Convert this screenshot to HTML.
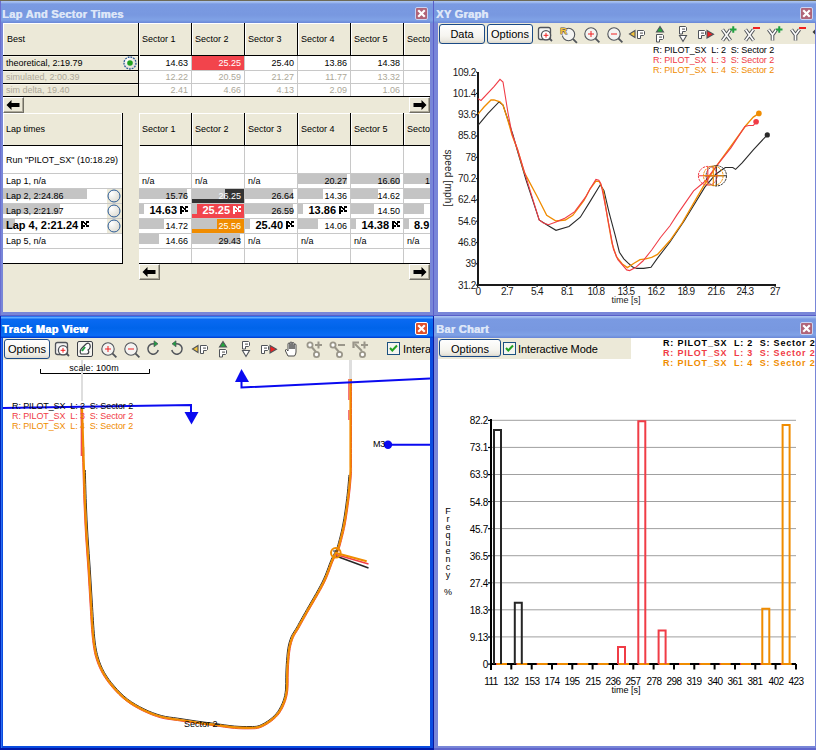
<!DOCTYPE html><html><head><meta charset="utf-8"><style>
html,body{margin:0;padding:0;}
body{width:816px;height:750px;position:relative;overflow:hidden;background:#fff;font-family:"Liberation Sans",sans-serif;}
body div{position:absolute;box-sizing:border-box;}
.t{white-space:nowrap;}
svg{position:absolute;}
</style></head><body>
<div style="left:0px;top:0px;width:816px;height:1px;background:#6e6a56;"></div>
<div style="left:0px;top:1px;width:434px;height:315px;background:#7886d8;"></div>
<div style="left:0px;top:1px;width:434px;height:22px;background:linear-gradient(#a6c0f0 0px,#a6c0f0 1px,#7a9ae2 3px,#7898e0 14px,#80a2e6 19px,#7090dc 21px,#6a86d6 22px);"></div>
<div class="t" style="left:2px;top:9px;font-size:11px;line-height:11px;color:#dde6f8;font-weight:bold;letter-spacing:0.3px;text-shadow:0.6px 0 0 #dde6f8;">Lap And Sector Times</div>
<div style="left:415px;top:7px;width:13px;height:13px;border:1px solid #c8d4f4;border-radius:2px;background:#b06478;"></div>
<svg style="left:415px;top:7px" width="13" height="13"><path d="M4 4 L9 9 M9 4 L4 9" stroke="#fff" stroke-width="2.2" stroke-linecap="square"/></svg>
<div style="left:434px;top:1px;width:385px;height:315px;background:#7886d8;"></div>
<div style="left:434px;top:1px;width:385px;height:22px;background:linear-gradient(#a6c0f0 0px,#a6c0f0 1px,#7a9ae2 3px,#7898e0 14px,#80a2e6 19px,#7090dc 21px,#6a86d6 22px);"></div>
<div class="t" style="left:436px;top:9px;font-size:11px;line-height:11px;color:#dde6f8;font-weight:bold;letter-spacing:0.3px;text-shadow:0.6px 0 0 #dde6f8;">XY Graph</div>
<div style="left:800px;top:7px;width:13px;height:13px;border:1px solid #c8d4f4;border-radius:2px;background:#b06478;"></div>
<svg style="left:800px;top:7px" width="13" height="13"><path d="M4 4 L9 9 M9 4 L4 9" stroke="#fff" stroke-width="2.2" stroke-linecap="square"/></svg>
<div style="left:0px;top:316px;width:434px;height:434px;background:#0a4ce0;"></div>
<div style="left:0px;top:316px;width:434px;height:22px;background:linear-gradient(#2a74f0 0px,#2a74f0 1px,#5eaaff 1px,#5eaaff 2px,#0a6af2 3px,#0064ea 12px,#0a6cf4 19px,#0a6af4 20px,#0048dc 21px,#0040d0 22px);"></div>
<div class="t" style="left:2px;top:324px;font-size:11px;line-height:11px;color:#fff;font-weight:bold;letter-spacing:0.3px;text-shadow:0.6px 0 0 #fff;">Track Map View</div>
<div style="left:415px;top:322px;width:13px;height:13px;border:1px solid #fff;border-radius:2px;background:#e0502a;"></div>
<svg style="left:415px;top:322px" width="13" height="13"><path d="M4 4 L9 9 M9 4 L4 9" stroke="#fff" stroke-width="2.2" stroke-linecap="square"/></svg>
<div style="left:434px;top:316px;width:385px;height:434px;background:#7886d8;"></div>
<div style="left:434px;top:316px;width:385px;height:22px;background:linear-gradient(#a6c0f0 0px,#a6c0f0 1px,#7a9ae2 3px,#7898e0 14px,#80a2e6 19px,#7090dc 21px,#6a86d6 22px);"></div>
<div class="t" style="left:436px;top:324px;font-size:11px;line-height:11px;color:#dde6f8;font-weight:bold;letter-spacing:0.3px;text-shadow:0.6px 0 0 #dde6f8;">Bar Chart</div>
<div style="left:800px;top:322px;width:13px;height:13px;border:1px solid #c8d4f4;border-radius:2px;background:#b06478;"></div>
<svg style="left:800px;top:322px" width="13" height="13"><path d="M4 4 L9 9 M9 4 L4 9" stroke="#fff" stroke-width="2.2" stroke-linecap="square"/></svg>
<div style="left:0px;top:1px;width:1px;height:315px;background:#6a6ed0;"></div>
<div style="left:433px;top:1px;width:1px;height:315px;background:#5a5fc8;"></div>
<div style="left:0px;top:315px;width:816px;height:1px;background:#5a5fc8;"></div>
<div style="left:0px;top:316px;width:1px;height:434px;background:#0024b8;"></div>
<div style="left:1px;top:338px;width:1px;height:412px;background:#2a6ef2;"></div>
<div style="left:433px;top:316px;width:1px;height:434px;background:#0a18a0;"></div>
<div style="left:0px;top:748px;width:434px;height:2px;background:#0018a8;"></div>
<div style="left:434px;top:748px;width:382px;height:2px;background:#6066cc;"></div>
<div style="left:3px;top:23px;width:427px;height:289px;background:#ece9d8;"></div>
<div style="left:438px;top:23px;width:377px;height:289px;background:#fff;"></div>
<div style="left:3px;top:338px;width:427px;height:408px;background:#fff;"></div>
<div style="left:438px;top:338px;width:377px;height:408px;background:#fff;"></div>
<div style="left:0;top:0;width:430px;height:316px;overflow:hidden;"><div style="left:3px;top:23px;width:135px;height:32px;background:#ece9d8;border-top:1px solid #fff;border-left:1px solid #fff;"></div>
<div style="left:3px;top:55px;width:136px;height:1px;background:#000;"></div>
<div style="left:138px;top:23px;width:1px;height:74px;background:#000;"></div>
<div class="t" style="left:7px;top:35px;font-size:9px;line-height:9px;color:#000;font-weight:normal;">Best</div>
<div style="left:3px;top:56px;width:135px;height:14px;background:#ece9d8;border-top:1px solid #f6f4ea;"></div>
<div style="left:3px;top:70px;width:135px;height:1px;background:#000;"></div>
<div class="t" style="left:6px;top:59px;font-size:9px;line-height:9px;color:#000;font-weight:normal;">theoretical, 2:19.79</div>
<div style="left:3px;top:71px;width:135px;height:12px;background:#ece9d8;border-top:1px solid #f6f4ea;"></div>
<div style="left:3px;top:83px;width:135px;height:1px;background:#000;"></div>
<div class="t" style="left:6px;top:73px;font-size:9px;line-height:9px;color:#aca899;font-weight:normal;">simulated, 2:00.39</div>
<div style="left:3px;top:84px;width:135px;height:12px;background:#ece9d8;border-top:1px solid #f6f4ea;"></div>
<div style="left:3px;top:96px;width:135px;height:1px;background:#000;"></div>
<div class="t" style="left:6px;top:86px;font-size:9px;line-height:9px;color:#aca899;font-weight:normal;">sim delta, 19.40</div>
<svg style="left:121.5px;top:54.5px" width="16" height="16"><defs><radialGradient id="rg" cx="0.3" cy="0.3" r="0.8"><stop offset="0" stop-color="#fff"/><stop offset="1" stop-color="#dcdad0"/></radialGradient></defs><circle cx="8" cy="8" r="6" fill="url(#rg)" stroke="#2a5a96" stroke-width="1.3" stroke-dasharray="1.8 1"/><circle cx="8" cy="8" r="2.8" fill="#21a121"/></svg>
<div style="left:139px;top:23px;width:291px;height:32px;background:#ece9d8;"></div>
<div style="left:139px;top:23px;width:52px;height:32px;background:#ece9d8;border-top:1px solid #fff;border-left:1px solid #fff;"></div>
<div style="left:191px;top:23px;width:1px;height:33px;background:#000;"></div>
<div class="t" style="left:142px;top:35px;font-size:9px;line-height:9px;color:#000;font-weight:normal;">Sector 1</div>
<div style="left:192px;top:23px;width:52px;height:32px;background:#ece9d8;border-top:1px solid #fff;border-left:1px solid #fff;"></div>
<div style="left:244px;top:23px;width:1px;height:33px;background:#000;"></div>
<div class="t" style="left:195px;top:35px;font-size:9px;line-height:9px;color:#000;font-weight:normal;">Sector 2</div>
<div style="left:245px;top:23px;width:52px;height:32px;background:#ece9d8;border-top:1px solid #fff;border-left:1px solid #fff;"></div>
<div style="left:297px;top:23px;width:1px;height:33px;background:#000;"></div>
<div class="t" style="left:248px;top:35px;font-size:9px;line-height:9px;color:#000;font-weight:normal;">Sector 3</div>
<div style="left:298px;top:23px;width:52px;height:32px;background:#ece9d8;border-top:1px solid #fff;border-left:1px solid #fff;"></div>
<div style="left:350px;top:23px;width:1px;height:33px;background:#000;"></div>
<div class="t" style="left:301px;top:35px;font-size:9px;line-height:9px;color:#000;font-weight:normal;">Sector 4</div>
<div style="left:351px;top:23px;width:52px;height:32px;background:#ece9d8;border-top:1px solid #fff;border-left:1px solid #fff;"></div>
<div style="left:403px;top:23px;width:1px;height:33px;background:#000;"></div>
<div class="t" style="left:354px;top:35px;font-size:9px;line-height:9px;color:#000;font-weight:normal;">Sector 5</div>
<div style="left:404px;top:23px;width:26px;height:32px;background:#ece9d8;border-top:1px solid #fff;border-left:1px solid #fff;"></div>
<div class="t" style="left:407px;top:35px;font-size:9px;line-height:9px;color:#000;font-weight:normal;">Sector 6</div>
<div style="left:140px;top:55px;width:290px;height:1px;background:#000;"></div>
<div style="left:139px;top:56px;width:291px;height:14px;background:#fff;"></div>
<div style="left:139px;top:70px;width:291px;height:1px;background:#c8c8c8;"></div>
<div style="left:191px;top:56px;width:1px;height:15px;background:#c8c8c8;"></div>
<div class="t" style="left:-112px;width:300px;text-align:right;top:59px;font-size:9px;line-height:9px;color:#000;font-weight:normal;">14.63</div>
<div style="left:244px;top:56px;width:1px;height:15px;background:#c8c8c8;"></div>
<div style="left:192px;top:56px;width:52px;height:14px;background:#f2444c;"></div>
<div class="t" style="left:-59px;width:300px;text-align:right;top:59px;font-size:9px;line-height:9px;color:#fff;font-weight:normal;">25.25</div>
<div style="left:297px;top:56px;width:1px;height:15px;background:#c8c8c8;"></div>
<div class="t" style="left:-6px;width:300px;text-align:right;top:59px;font-size:9px;line-height:9px;color:#000;font-weight:normal;">25.40</div>
<div style="left:350px;top:56px;width:1px;height:15px;background:#c8c8c8;"></div>
<div class="t" style="left:47px;width:300px;text-align:right;top:59px;font-size:9px;line-height:9px;color:#000;font-weight:normal;">13.86</div>
<div style="left:403px;top:56px;width:1px;height:15px;background:#c8c8c8;"></div>
<div class="t" style="left:100px;width:300px;text-align:right;top:59px;font-size:9px;line-height:9px;color:#000;font-weight:normal;">14.38</div>
<div style="left:139px;top:71px;width:291px;height:12px;background:#fff;"></div>
<div style="left:139px;top:83px;width:291px;height:1px;background:#c8c8c8;"></div>
<div style="left:191px;top:71px;width:1px;height:13px;background:#c8c8c8;"></div>
<div class="t" style="left:-112px;width:300px;text-align:right;top:73px;font-size:9px;line-height:9px;color:#aca899;font-weight:normal;">12.22</div>
<div style="left:244px;top:71px;width:1px;height:13px;background:#c8c8c8;"></div>
<div class="t" style="left:-59px;width:300px;text-align:right;top:73px;font-size:9px;line-height:9px;color:#aca899;font-weight:normal;">20.59</div>
<div style="left:297px;top:71px;width:1px;height:13px;background:#c8c8c8;"></div>
<div class="t" style="left:-6px;width:300px;text-align:right;top:73px;font-size:9px;line-height:9px;color:#aca899;font-weight:normal;">21.27</div>
<div style="left:350px;top:71px;width:1px;height:13px;background:#c8c8c8;"></div>
<div class="t" style="left:47px;width:300px;text-align:right;top:73px;font-size:9px;line-height:9px;color:#aca899;font-weight:normal;">11.77</div>
<div style="left:403px;top:71px;width:1px;height:13px;background:#c8c8c8;"></div>
<div class="t" style="left:100px;width:300px;text-align:right;top:73px;font-size:9px;line-height:9px;color:#aca899;font-weight:normal;">13.32</div>
<div style="left:139px;top:84px;width:291px;height:12px;background:#fff;"></div>
<div style="left:191px;top:84px;width:1px;height:13px;background:#c8c8c8;"></div>
<div class="t" style="left:-112px;width:300px;text-align:right;top:86px;font-size:9px;line-height:9px;color:#aca899;font-weight:normal;">2.41</div>
<div style="left:244px;top:84px;width:1px;height:13px;background:#c8c8c8;"></div>
<div class="t" style="left:-59px;width:300px;text-align:right;top:86px;font-size:9px;line-height:9px;color:#aca899;font-weight:normal;">4.66</div>
<div style="left:297px;top:84px;width:1px;height:13px;background:#c8c8c8;"></div>
<div class="t" style="left:-6px;width:300px;text-align:right;top:86px;font-size:9px;line-height:9px;color:#aca899;font-weight:normal;">4.13</div>
<div style="left:350px;top:84px;width:1px;height:13px;background:#c8c8c8;"></div>
<div class="t" style="left:47px;width:300px;text-align:right;top:86px;font-size:9px;line-height:9px;color:#aca899;font-weight:normal;">2.09</div>
<div style="left:403px;top:84px;width:1px;height:13px;background:#c8c8c8;"></div>
<div class="t" style="left:100px;width:300px;text-align:right;top:86px;font-size:9px;line-height:9px;color:#aca899;font-weight:normal;">1.06</div>
<div style="left:3px;top:96px;width:427px;height:1px;background:#000;"></div>
<div style="left:3px;top:97px;width:21px;height:16px;background:#ece9d8;border-top:1px solid #fff;border-left:1px solid #fff;border-right:1px solid #716f64;border-bottom:1px solid #716f64;box-shadow:inset -1px -1px 0 #aca899;"></div><svg style="left:0px;top:0px" width="816" height="750"><path d="M6.5 105.0 L11.5 100.0 L11.5 103.0 L19.5 103.0 L19.5 107.0 L11.5 107.0 L11.5 110.0 Z" fill="#000"/></svg>
<div style="left:409px;top:97px;width:21px;height:16px;background:#ece9d8;border-top:1px solid #fff;border-left:1px solid #fff;border-right:1px solid #716f64;border-bottom:1px solid #716f64;box-shadow:inset -1px -1px 0 #aca899;"></div><svg style="left:0px;top:0px" width="816" height="750"><path d="M426.5 105.0 L421.5 100.0 L421.5 103.0 L413.5 103.0 L413.5 107.0 L421.5 107.0 L421.5 110.0 Z" fill="#000"/></svg>
<div style="left:3px;top:113px;width:119px;height:32px;background:#ece9d8;border-top:1px solid #fff;border-left:1px solid #fff;border-right:1px solid #fff;"></div>
<div style="left:122px;top:113px;width:1px;height:151px;background:#000;"></div>
<div style="left:3px;top:145px;width:119px;height:1px;background:#000;"></div>
<div class="t" style="left:6px;top:125px;font-size:9px;line-height:9px;color:#000;font-weight:normal;">Lap times</div>
<div style="left:139px;top:113px;width:291px;height:32px;background:#ece9d8;"></div>
<div style="left:139px;top:113px;width:52px;height:32px;background:#ece9d8;border-top:1px solid #fff;border-left:1px solid #fff;"></div>
<div style="left:191px;top:113px;width:1px;height:33px;background:#000;"></div>
<div class="t" style="left:142px;top:125px;font-size:9px;line-height:9px;color:#000;font-weight:normal;">Sector 1</div>
<div style="left:192px;top:113px;width:52px;height:32px;background:#ece9d8;border-top:1px solid #fff;border-left:1px solid #fff;"></div>
<div style="left:244px;top:113px;width:1px;height:33px;background:#000;"></div>
<div class="t" style="left:195px;top:125px;font-size:9px;line-height:9px;color:#000;font-weight:normal;">Sector 2</div>
<div style="left:245px;top:113px;width:52px;height:32px;background:#ece9d8;border-top:1px solid #fff;border-left:1px solid #fff;"></div>
<div style="left:297px;top:113px;width:1px;height:33px;background:#000;"></div>
<div class="t" style="left:248px;top:125px;font-size:9px;line-height:9px;color:#000;font-weight:normal;">Sector 3</div>
<div style="left:298px;top:113px;width:52px;height:32px;background:#ece9d8;border-top:1px solid #fff;border-left:1px solid #fff;"></div>
<div style="left:350px;top:113px;width:1px;height:33px;background:#000;"></div>
<div class="t" style="left:301px;top:125px;font-size:9px;line-height:9px;color:#000;font-weight:normal;">Sector 4</div>
<div style="left:351px;top:113px;width:52px;height:32px;background:#ece9d8;border-top:1px solid #fff;border-left:1px solid #fff;"></div>
<div style="left:403px;top:113px;width:1px;height:33px;background:#000;"></div>
<div class="t" style="left:354px;top:125px;font-size:9px;line-height:9px;color:#000;font-weight:normal;">Sector 5</div>
<div style="left:404px;top:113px;width:26px;height:32px;background:#ece9d8;border-top:1px solid #fff;border-left:1px solid #fff;"></div>
<div class="t" style="left:407px;top:125px;font-size:9px;line-height:9px;color:#000;font-weight:normal;">Sector 6</div>
<div style="left:140px;top:145px;width:290px;height:1px;background:#000;"></div>
<div style="left:3px;top:146px;width:119px;height:117px;background:#fff;"></div>
<div style="left:139px;top:146px;width:291px;height:117px;background:#fff;"></div>
<div style="left:3px;top:189px;width:84px;height:10px;background:#c4c4c4;"></div>
<div style="left:3px;top:204px;width:57px;height:10px;background:#c4c4c4;"></div>
<div style="left:3px;top:219px;width:12px;height:10px;background:#c4c4c4;"></div>
<div style="left:107px;top:189px;width:15px;height:14px;background:#ece9d8;"></div>
<svg style="left:105.5px;top:187.5px" width="16" height="16"><defs><radialGradient id="rg" cx="0.3" cy="0.3" r="0.8"><stop offset="0" stop-color="#fff"/><stop offset="1" stop-color="#dcdad0"/></radialGradient></defs><circle cx="8" cy="8" r="6" fill="url(#rg)" stroke="#2a5a96" stroke-width="1" /></svg>
<div style="left:107px;top:204px;width:15px;height:14px;background:#ece9d8;"></div>
<svg style="left:105.5px;top:202.5px" width="16" height="16"><defs><radialGradient id="rg" cx="0.3" cy="0.3" r="0.8"><stop offset="0" stop-color="#fff"/><stop offset="1" stop-color="#dcdad0"/></radialGradient></defs><circle cx="8" cy="8" r="6" fill="url(#rg)" stroke="#2a5a96" stroke-width="1" /></svg>
<div style="left:107px;top:219px;width:15px;height:14px;background:#ece9d8;"></div>
<svg style="left:105.5px;top:217.5px" width="16" height="16"><defs><radialGradient id="rg" cx="0.3" cy="0.3" r="0.8"><stop offset="0" stop-color="#fff"/><stop offset="1" stop-color="#dcdad0"/></radialGradient></defs><circle cx="8" cy="8" r="6" fill="url(#rg)" stroke="#2a5a96" stroke-width="1" /></svg>
<div style="left:3px;top:173px;width:119px;height:1px;background:#c8c8c8;"></div>
<div style="left:139px;top:173px;width:291px;height:1px;background:#c8c8c8;"></div>
<div style="left:3px;top:188px;width:119px;height:1px;background:#c8c8c8;"></div>
<div style="left:139px;top:188px;width:291px;height:1px;background:#c8c8c8;"></div>
<div style="left:3px;top:203px;width:119px;height:1px;background:#c8c8c8;"></div>
<div style="left:139px;top:203px;width:291px;height:1px;background:#c8c8c8;"></div>
<div style="left:3px;top:218px;width:119px;height:1px;background:#c8c8c8;"></div>
<div style="left:139px;top:218px;width:291px;height:1px;background:#c8c8c8;"></div>
<div style="left:3px;top:233px;width:119px;height:1px;background:#c8c8c8;"></div>
<div style="left:139px;top:233px;width:291px;height:1px;background:#c8c8c8;"></div>
<div style="left:3px;top:248px;width:119px;height:1px;background:#c8c8c8;"></div>
<div style="left:139px;top:248px;width:291px;height:1px;background:#c8c8c8;"></div>
<div style="left:3px;top:263px;width:120px;height:1px;background:#000;"></div>
<div style="left:139px;top:263px;width:291px;height:1px;background:#000;"></div>
<div style="left:191px;top:146px;width:1px;height:117px;background:#c8c8c8;"></div>
<div style="left:244px;top:146px;width:1px;height:117px;background:#c8c8c8;"></div>
<div style="left:297px;top:146px;width:1px;height:117px;background:#c8c8c8;"></div>
<div style="left:350px;top:146px;width:1px;height:117px;background:#c8c8c8;"></div>
<div style="left:403px;top:146px;width:1px;height:117px;background:#c8c8c8;"></div>
<div class="t" style="left:6px;top:156px;font-size:9px;line-height:9px;color:#000;font-weight:normal;">Run &quot;PILOT_SX&quot; (10:18.29)</div>
<div class="t" style="left:6px;top:177px;font-size:9px;line-height:9px;color:#000;font-weight:normal;">Lap 1, n/a</div>
<div class="t" style="left:6px;top:192px;font-size:9px;line-height:9px;color:#000;font-weight:normal;">Lap 2, 2:24.86</div>
<div class="t" style="left:6px;top:207px;font-size:9px;line-height:9px;color:#000;font-weight:normal;">Lap 3, 2:21.97</div>
<div class="t" style="left:6px;top:220px;font-size:11px;line-height:11px;color:#000;font-weight:bold;">Lap 4, 2:21.24</div>
<svg style="left:81px;top:221px" width="8" height="8" shape-rendering="crispEdges"><rect x="0" y="0" width="1" height="1" fill="#000"/><rect x="1" y="0" width="1" height="1" fill="#000"/><rect x="2" y="0" width="1" height="1" fill="#000"/><rect x="5" y="0" width="1" height="1" fill="#000"/><rect x="6" y="0" width="1" height="1" fill="#000"/><rect x="7" y="0" width="1" height="1" fill="#000"/><rect x="0" y="1" width="1" height="1" fill="#000"/><rect x="1" y="1" width="1" height="1" fill="#000"/><rect x="2" y="1" width="1" height="1" fill="#000"/><rect x="3" y="1" width="1" height="1" fill="#000"/><rect x="5" y="1" width="1" height="1" fill="#000"/><rect x="6" y="1" width="1" height="1" fill="#000"/><rect x="7" y="1" width="1" height="1" fill="#000"/><rect x="0" y="2" width="1" height="1" fill="#000"/><rect x="1" y="2" width="1" height="1" fill="#000"/><rect x="3" y="2" width="1" height="1" fill="#000"/><rect x="4" y="2" width="1" height="1" fill="#000"/><rect x="5" y="2" width="1" height="1" fill="#000"/><rect x="0" y="3" width="1" height="1" fill="#000"/><rect x="1" y="3" width="1" height="1" fill="#000"/><rect x="4" y="3" width="1" height="1" fill="#000"/><rect x="5" y="3" width="1" height="1" fill="#000"/><rect x="0" y="4" width="1" height="1" fill="#000"/><rect x="1" y="4" width="1" height="1" fill="#000"/><rect x="2" y="4" width="1" height="1" fill="#000"/><rect x="3" y="4" width="1" height="1" fill="#000"/><rect x="5" y="4" width="1" height="1" fill="#000"/><rect x="6" y="4" width="1" height="1" fill="#000"/><rect x="7" y="4" width="1" height="1" fill="#000"/><rect x="0" y="5" width="1" height="1" fill="#000"/><rect x="1" y="5" width="1" height="1" fill="#000"/><rect x="2" y="5" width="1" height="1" fill="#000"/><rect x="3" y="5" width="1" height="1" fill="#000"/><rect x="5" y="5" width="1" height="1" fill="#000"/><rect x="6" y="5" width="1" height="1" fill="#000"/><rect x="7" y="5" width="1" height="1" fill="#000"/><rect x="0" y="6" width="1" height="1" fill="#000"/><rect x="1" y="6" width="1" height="1" fill="#000"/><rect x="0" y="7" width="1" height="1" fill="#000"/><rect x="1" y="7" width="1" height="1" fill="#000"/></svg>
<div class="t" style="left:6px;top:237px;font-size:9px;line-height:9px;color:#000;font-weight:normal;">Lap 5, n/a</div>
<div style="left:139px;top:146px;width:291px;height:117px;overflow:hidden;">
<div class="t" style="left:3px;top:31px;font-size:9px;line-height:9px;color:#000;font-weight:normal;">n/a</div>
<div class="t" style="left:56px;top:31px;font-size:9px;line-height:9px;color:#000;font-weight:normal;">n/a</div>
<div class="t" style="left:109px;top:31px;font-size:9px;line-height:9px;color:#000;font-weight:normal;">n/a</div>
<div style="left:159px;top:28px;width:49px;height:10px;background:#c4c4c4;"></div>
<div class="t" style="left:-92px;width:300px;text-align:right;top:31px;font-size:9px;line-height:9px;color:#000;font-weight:normal;">20.27</div>
<div style="left:212px;top:28px;width:49px;height:10px;background:#c4c4c4;"></div>
<div class="t" style="left:-39px;width:300px;text-align:right;top:31px;font-size:9px;line-height:9px;color:#000;font-weight:normal;">16.60</div>
<div style="left:265px;top:28px;width:26px;height:10px;background:#c4c4c4;"></div>
<div class="t" style="left:286px;top:31px;font-size:9px;line-height:9px;color:#000;font-weight:normal;">1</div>
<div style="left:0px;top:43px;width:48px;height:10px;background:#c4c4c4;"></div>
<div class="t" style="left:-251px;width:300px;text-align:right;top:46px;font-size:9px;line-height:9px;color:#000;font-weight:normal;">15.76</div>
<div style="left:53px;top:43px;width:52px;height:10px;background:#333333;"></div>
<div style="left:53px;top:43px;width:33px;height:10px;background:#c4c4c4;"></div>
<div style="left:53px;top:53px;width:52px;height:4px;background:#333333;"></div>
<div class="t" style="left:-198px;width:300px;text-align:right;top:46px;font-size:9px;line-height:9px;color:#fff;font-weight:normal;">26.25</div>
<div style="left:106px;top:43px;width:48px;height:10px;background:#c4c4c4;"></div>
<div class="t" style="left:-145px;width:300px;text-align:right;top:46px;font-size:9px;line-height:9px;color:#000;font-weight:normal;">26.64</div>
<div style="left:159px;top:43px;width:25px;height:10px;background:#c4c4c4;"></div>
<div class="t" style="left:-92px;width:300px;text-align:right;top:46px;font-size:9px;line-height:9px;color:#000;font-weight:normal;">14.36</div>
<div style="left:212px;top:43px;width:27px;height:10px;background:#c4c4c4;"></div>
<div class="t" style="left:-39px;width:300px;text-align:right;top:46px;font-size:9px;line-height:9px;color:#000;font-weight:normal;">14.62</div>
<div style="left:265px;top:43px;width:26px;height:10px;background:#c4c4c4;"></div>
<div style="left:0px;top:58px;width:5px;height:10px;background:#c4c4c4;"></div>
<div class="t" style="left:-262px;width:300px;text-align:right;top:59px;font-size:11px;line-height:11px;color:#000;font-weight:bold;">14.63</div>
<svg style="left:41px;top:60px" width="8" height="8" shape-rendering="crispEdges"><rect x="0" y="0" width="1" height="1" fill="#000"/><rect x="1" y="0" width="1" height="1" fill="#000"/><rect x="2" y="0" width="1" height="1" fill="#000"/><rect x="5" y="0" width="1" height="1" fill="#000"/><rect x="6" y="0" width="1" height="1" fill="#000"/><rect x="7" y="0" width="1" height="1" fill="#000"/><rect x="0" y="1" width="1" height="1" fill="#000"/><rect x="1" y="1" width="1" height="1" fill="#000"/><rect x="2" y="1" width="1" height="1" fill="#000"/><rect x="3" y="1" width="1" height="1" fill="#000"/><rect x="5" y="1" width="1" height="1" fill="#000"/><rect x="6" y="1" width="1" height="1" fill="#000"/><rect x="7" y="1" width="1" height="1" fill="#000"/><rect x="0" y="2" width="1" height="1" fill="#000"/><rect x="1" y="2" width="1" height="1" fill="#000"/><rect x="3" y="2" width="1" height="1" fill="#000"/><rect x="4" y="2" width="1" height="1" fill="#000"/><rect x="5" y="2" width="1" height="1" fill="#000"/><rect x="0" y="3" width="1" height="1" fill="#000"/><rect x="1" y="3" width="1" height="1" fill="#000"/><rect x="4" y="3" width="1" height="1" fill="#000"/><rect x="5" y="3" width="1" height="1" fill="#000"/><rect x="0" y="4" width="1" height="1" fill="#000"/><rect x="1" y="4" width="1" height="1" fill="#000"/><rect x="2" y="4" width="1" height="1" fill="#000"/><rect x="3" y="4" width="1" height="1" fill="#000"/><rect x="5" y="4" width="1" height="1" fill="#000"/><rect x="6" y="4" width="1" height="1" fill="#000"/><rect x="7" y="4" width="1" height="1" fill="#000"/><rect x="0" y="5" width="1" height="1" fill="#000"/><rect x="1" y="5" width="1" height="1" fill="#000"/><rect x="2" y="5" width="1" height="1" fill="#000"/><rect x="3" y="5" width="1" height="1" fill="#000"/><rect x="5" y="5" width="1" height="1" fill="#000"/><rect x="6" y="5" width="1" height="1" fill="#000"/><rect x="7" y="5" width="1" height="1" fill="#000"/><rect x="0" y="6" width="1" height="1" fill="#000"/><rect x="1" y="6" width="1" height="1" fill="#000"/><rect x="0" y="7" width="1" height="1" fill="#000"/><rect x="1" y="7" width="1" height="1" fill="#000"/></svg>
<div style="left:53px;top:58px;width:52px;height:10px;background:#f2444c;"></div>
<div style="left:53px;top:58px;width:5px;height:10px;background:#c4c4c4;"></div>
<div style="left:53px;top:68px;width:52px;height:4px;background:#f2444c;"></div>
<div class="t" style="left:-209px;width:300px;text-align:right;top:59px;font-size:11px;line-height:11px;color:#fff;font-weight:bold;">25.25</div>
<svg style="left:94px;top:60px" width="8" height="8" shape-rendering="crispEdges"><rect x="0" y="0" width="1" height="1" fill="#fff"/><rect x="1" y="0" width="1" height="1" fill="#fff"/><rect x="2" y="0" width="1" height="1" fill="#fff"/><rect x="5" y="0" width="1" height="1" fill="#fff"/><rect x="6" y="0" width="1" height="1" fill="#fff"/><rect x="7" y="0" width="1" height="1" fill="#fff"/><rect x="0" y="1" width="1" height="1" fill="#fff"/><rect x="1" y="1" width="1" height="1" fill="#fff"/><rect x="2" y="1" width="1" height="1" fill="#fff"/><rect x="3" y="1" width="1" height="1" fill="#fff"/><rect x="5" y="1" width="1" height="1" fill="#fff"/><rect x="6" y="1" width="1" height="1" fill="#fff"/><rect x="7" y="1" width="1" height="1" fill="#fff"/><rect x="0" y="2" width="1" height="1" fill="#fff"/><rect x="1" y="2" width="1" height="1" fill="#fff"/><rect x="3" y="2" width="1" height="1" fill="#fff"/><rect x="4" y="2" width="1" height="1" fill="#fff"/><rect x="5" y="2" width="1" height="1" fill="#fff"/><rect x="0" y="3" width="1" height="1" fill="#fff"/><rect x="1" y="3" width="1" height="1" fill="#fff"/><rect x="4" y="3" width="1" height="1" fill="#fff"/><rect x="5" y="3" width="1" height="1" fill="#fff"/><rect x="0" y="4" width="1" height="1" fill="#fff"/><rect x="1" y="4" width="1" height="1" fill="#fff"/><rect x="2" y="4" width="1" height="1" fill="#fff"/><rect x="3" y="4" width="1" height="1" fill="#fff"/><rect x="5" y="4" width="1" height="1" fill="#fff"/><rect x="6" y="4" width="1" height="1" fill="#fff"/><rect x="7" y="4" width="1" height="1" fill="#fff"/><rect x="0" y="5" width="1" height="1" fill="#fff"/><rect x="1" y="5" width="1" height="1" fill="#fff"/><rect x="2" y="5" width="1" height="1" fill="#fff"/><rect x="3" y="5" width="1" height="1" fill="#fff"/><rect x="5" y="5" width="1" height="1" fill="#fff"/><rect x="6" y="5" width="1" height="1" fill="#fff"/><rect x="7" y="5" width="1" height="1" fill="#fff"/><rect x="0" y="6" width="1" height="1" fill="#fff"/><rect x="1" y="6" width="1" height="1" fill="#fff"/><rect x="0" y="7" width="1" height="1" fill="#fff"/><rect x="1" y="7" width="1" height="1" fill="#fff"/></svg>
<div style="left:106px;top:58px;width:48px;height:10px;background:#c4c4c4;"></div>
<div class="t" style="left:-145px;width:300px;text-align:right;top:61px;font-size:9px;line-height:9px;color:#000;font-weight:normal;">26.59</div>
<div style="left:159px;top:58px;width:5px;height:10px;background:#c4c4c4;"></div>
<div class="t" style="left:-103px;width:300px;text-align:right;top:59px;font-size:11px;line-height:11px;color:#000;font-weight:bold;">13.86</div>
<svg style="left:200px;top:60px" width="8" height="8" shape-rendering="crispEdges"><rect x="0" y="0" width="1" height="1" fill="#000"/><rect x="1" y="0" width="1" height="1" fill="#000"/><rect x="2" y="0" width="1" height="1" fill="#000"/><rect x="5" y="0" width="1" height="1" fill="#000"/><rect x="6" y="0" width="1" height="1" fill="#000"/><rect x="7" y="0" width="1" height="1" fill="#000"/><rect x="0" y="1" width="1" height="1" fill="#000"/><rect x="1" y="1" width="1" height="1" fill="#000"/><rect x="2" y="1" width="1" height="1" fill="#000"/><rect x="3" y="1" width="1" height="1" fill="#000"/><rect x="5" y="1" width="1" height="1" fill="#000"/><rect x="6" y="1" width="1" height="1" fill="#000"/><rect x="7" y="1" width="1" height="1" fill="#000"/><rect x="0" y="2" width="1" height="1" fill="#000"/><rect x="1" y="2" width="1" height="1" fill="#000"/><rect x="3" y="2" width="1" height="1" fill="#000"/><rect x="4" y="2" width="1" height="1" fill="#000"/><rect x="5" y="2" width="1" height="1" fill="#000"/><rect x="0" y="3" width="1" height="1" fill="#000"/><rect x="1" y="3" width="1" height="1" fill="#000"/><rect x="4" y="3" width="1" height="1" fill="#000"/><rect x="5" y="3" width="1" height="1" fill="#000"/><rect x="0" y="4" width="1" height="1" fill="#000"/><rect x="1" y="4" width="1" height="1" fill="#000"/><rect x="2" y="4" width="1" height="1" fill="#000"/><rect x="3" y="4" width="1" height="1" fill="#000"/><rect x="5" y="4" width="1" height="1" fill="#000"/><rect x="6" y="4" width="1" height="1" fill="#000"/><rect x="7" y="4" width="1" height="1" fill="#000"/><rect x="0" y="5" width="1" height="1" fill="#000"/><rect x="1" y="5" width="1" height="1" fill="#000"/><rect x="2" y="5" width="1" height="1" fill="#000"/><rect x="3" y="5" width="1" height="1" fill="#000"/><rect x="5" y="5" width="1" height="1" fill="#000"/><rect x="6" y="5" width="1" height="1" fill="#000"/><rect x="7" y="5" width="1" height="1" fill="#000"/><rect x="0" y="6" width="1" height="1" fill="#000"/><rect x="1" y="6" width="1" height="1" fill="#000"/><rect x="0" y="7" width="1" height="1" fill="#000"/><rect x="1" y="7" width="1" height="1" fill="#000"/></svg>
<div style="left:212px;top:58px;width:23px;height:10px;background:#c4c4c4;"></div>
<div class="t" style="left:-39px;width:300px;text-align:right;top:61px;font-size:9px;line-height:9px;color:#000;font-weight:normal;">14.50</div>
<div style="left:265px;top:58px;width:20px;height:10px;background:#c4c4c4;"></div>
<div style="left:0px;top:73px;width:25px;height:10px;background:#c4c4c4;"></div>
<div class="t" style="left:-251px;width:300px;text-align:right;top:76px;font-size:9px;line-height:9px;color:#000;font-weight:normal;">14.72</div>
<div style="left:53px;top:73px;width:52px;height:10px;background:#f08c00;"></div>
<div style="left:53px;top:73px;width:25px;height:10px;background:#c4c4c4;"></div>
<div style="left:53px;top:83px;width:52px;height:4px;background:#f08c00;"></div>
<div class="t" style="left:-198px;width:300px;text-align:right;top:76px;font-size:9px;line-height:9px;color:#fff;font-weight:normal;">25.56</div>
<div style="left:106px;top:73px;width:5px;height:10px;background:#c4c4c4;"></div>
<div class="t" style="left:-156px;width:300px;text-align:right;top:74px;font-size:11px;line-height:11px;color:#000;font-weight:bold;">25.40</div>
<svg style="left:147px;top:75px" width="8" height="8" shape-rendering="crispEdges"><rect x="0" y="0" width="1" height="1" fill="#000"/><rect x="1" y="0" width="1" height="1" fill="#000"/><rect x="2" y="0" width="1" height="1" fill="#000"/><rect x="5" y="0" width="1" height="1" fill="#000"/><rect x="6" y="0" width="1" height="1" fill="#000"/><rect x="7" y="0" width="1" height="1" fill="#000"/><rect x="0" y="1" width="1" height="1" fill="#000"/><rect x="1" y="1" width="1" height="1" fill="#000"/><rect x="2" y="1" width="1" height="1" fill="#000"/><rect x="3" y="1" width="1" height="1" fill="#000"/><rect x="5" y="1" width="1" height="1" fill="#000"/><rect x="6" y="1" width="1" height="1" fill="#000"/><rect x="7" y="1" width="1" height="1" fill="#000"/><rect x="0" y="2" width="1" height="1" fill="#000"/><rect x="1" y="2" width="1" height="1" fill="#000"/><rect x="3" y="2" width="1" height="1" fill="#000"/><rect x="4" y="2" width="1" height="1" fill="#000"/><rect x="5" y="2" width="1" height="1" fill="#000"/><rect x="0" y="3" width="1" height="1" fill="#000"/><rect x="1" y="3" width="1" height="1" fill="#000"/><rect x="4" y="3" width="1" height="1" fill="#000"/><rect x="5" y="3" width="1" height="1" fill="#000"/><rect x="0" y="4" width="1" height="1" fill="#000"/><rect x="1" y="4" width="1" height="1" fill="#000"/><rect x="2" y="4" width="1" height="1" fill="#000"/><rect x="3" y="4" width="1" height="1" fill="#000"/><rect x="5" y="4" width="1" height="1" fill="#000"/><rect x="6" y="4" width="1" height="1" fill="#000"/><rect x="7" y="4" width="1" height="1" fill="#000"/><rect x="0" y="5" width="1" height="1" fill="#000"/><rect x="1" y="5" width="1" height="1" fill="#000"/><rect x="2" y="5" width="1" height="1" fill="#000"/><rect x="3" y="5" width="1" height="1" fill="#000"/><rect x="5" y="5" width="1" height="1" fill="#000"/><rect x="6" y="5" width="1" height="1" fill="#000"/><rect x="7" y="5" width="1" height="1" fill="#000"/><rect x="0" y="6" width="1" height="1" fill="#000"/><rect x="1" y="6" width="1" height="1" fill="#000"/><rect x="0" y="7" width="1" height="1" fill="#000"/><rect x="1" y="7" width="1" height="1" fill="#000"/></svg>
<div style="left:159px;top:73px;width:20px;height:10px;background:#c4c4c4;"></div>
<div class="t" style="left:-92px;width:300px;text-align:right;top:76px;font-size:9px;line-height:9px;color:#000;font-weight:normal;">14.06</div>
<div style="left:212px;top:73px;width:5px;height:10px;background:#c4c4c4;"></div>
<div class="t" style="left:-50px;width:300px;text-align:right;top:74px;font-size:11px;line-height:11px;color:#000;font-weight:bold;">14.38</div>
<svg style="left:253px;top:75px" width="8" height="8" shape-rendering="crispEdges"><rect x="0" y="0" width="1" height="1" fill="#000"/><rect x="1" y="0" width="1" height="1" fill="#000"/><rect x="2" y="0" width="1" height="1" fill="#000"/><rect x="5" y="0" width="1" height="1" fill="#000"/><rect x="6" y="0" width="1" height="1" fill="#000"/><rect x="7" y="0" width="1" height="1" fill="#000"/><rect x="0" y="1" width="1" height="1" fill="#000"/><rect x="1" y="1" width="1" height="1" fill="#000"/><rect x="2" y="1" width="1" height="1" fill="#000"/><rect x="3" y="1" width="1" height="1" fill="#000"/><rect x="5" y="1" width="1" height="1" fill="#000"/><rect x="6" y="1" width="1" height="1" fill="#000"/><rect x="7" y="1" width="1" height="1" fill="#000"/><rect x="0" y="2" width="1" height="1" fill="#000"/><rect x="1" y="2" width="1" height="1" fill="#000"/><rect x="3" y="2" width="1" height="1" fill="#000"/><rect x="4" y="2" width="1" height="1" fill="#000"/><rect x="5" y="2" width="1" height="1" fill="#000"/><rect x="0" y="3" width="1" height="1" fill="#000"/><rect x="1" y="3" width="1" height="1" fill="#000"/><rect x="4" y="3" width="1" height="1" fill="#000"/><rect x="5" y="3" width="1" height="1" fill="#000"/><rect x="0" y="4" width="1" height="1" fill="#000"/><rect x="1" y="4" width="1" height="1" fill="#000"/><rect x="2" y="4" width="1" height="1" fill="#000"/><rect x="3" y="4" width="1" height="1" fill="#000"/><rect x="5" y="4" width="1" height="1" fill="#000"/><rect x="6" y="4" width="1" height="1" fill="#000"/><rect x="7" y="4" width="1" height="1" fill="#000"/><rect x="0" y="5" width="1" height="1" fill="#000"/><rect x="1" y="5" width="1" height="1" fill="#000"/><rect x="2" y="5" width="1" height="1" fill="#000"/><rect x="3" y="5" width="1" height="1" fill="#000"/><rect x="5" y="5" width="1" height="1" fill="#000"/><rect x="6" y="5" width="1" height="1" fill="#000"/><rect x="7" y="5" width="1" height="1" fill="#000"/><rect x="0" y="6" width="1" height="1" fill="#000"/><rect x="1" y="6" width="1" height="1" fill="#000"/><rect x="0" y="7" width="1" height="1" fill="#000"/><rect x="1" y="7" width="1" height="1" fill="#000"/></svg>
<div style="left:265px;top:73px;width:5px;height:10px;background:#c4c4c4;"></div>
<div class="t" style="left:275px;top:74px;font-size:11px;line-height:11px;color:#000;font-weight:bold;">8.9</div>
<div style="left:0px;top:88px;width:20px;height:10px;background:#c4c4c4;"></div>
<div class="t" style="left:-251px;width:300px;text-align:right;top:91px;font-size:9px;line-height:9px;color:#000;font-weight:normal;">14.66</div>
<div style="left:53px;top:88px;width:48px;height:10px;background:#c4c4c4;"></div>
<div class="t" style="left:-198px;width:300px;text-align:right;top:91px;font-size:9px;line-height:9px;color:#000;font-weight:normal;">29.43</div>
<div class="t" style="left:109px;top:91px;font-size:9px;line-height:9px;color:#000;font-weight:normal;">n/a</div>
<div class="t" style="left:162px;top:91px;font-size:9px;line-height:9px;color:#000;font-weight:normal;">n/a</div>
<div class="t" style="left:215px;top:91px;font-size:9px;line-height:9px;color:#000;font-weight:normal;">n/a</div>
<div class="t" style="left:268px;top:91px;font-size:9px;line-height:9px;color:#000;font-weight:normal;">n/a</div>
</div>
<div style="left:139px;top:264px;width:21px;height:16px;background:#ece9d8;border-top:1px solid #fff;border-left:1px solid #fff;border-right:1px solid #716f64;border-bottom:1px solid #716f64;box-shadow:inset -1px -1px 0 #aca899;"></div><svg style="left:0px;top:0px" width="816" height="750"><path d="M142.5 272.0 L147.5 267.0 L147.5 270.0 L155.5 270.0 L155.5 274.0 L147.5 274.0 L147.5 277.0 Z" fill="#000"/></svg>
<div style="left:409px;top:264px;width:21px;height:16px;background:#ece9d8;border-top:1px solid #fff;border-left:1px solid #fff;border-right:1px solid #716f64;border-bottom:1px solid #716f64;box-shadow:inset -1px -1px 0 #aca899;"></div><svg style="left:0px;top:0px" width="816" height="750"><path d="M426.5 272.0 L421.5 267.0 L421.5 270.0 L413.5 270.0 L413.5 274.0 L421.5 274.0 L421.5 277.0 Z" fill="#000"/></svg></div>
<div style="left:438px;top:23px;width:377px;height:21px;background:#ece9d8;"></div>
<div style="left:439px;top:24px;width:46px;height:20px;border:1px solid #1b4a86;border-radius:3px;background:linear-gradient(#fefefe,#f6f5f0 60%,#ebe9e1 85%,#dcd8cc);"></div>
<div class="t" style="left:262px;width:400px;text-align:center;top:29px;font-size:11px;line-height:11px;color:#000;font-weight:normal;">Data</div>
<div style="left:487px;top:24px;width:46px;height:20px;border:1px solid #1b4a86;border-radius:3px;background:linear-gradient(#fefefe,#f6f5f0 60%,#ebe9e1 85%,#dcd8cc);"></div>
<div class="t" style="left:310px;width:400px;text-align:center;top:29px;font-size:11px;line-height:11px;color:#000;font-weight:normal;">Options</div>
<svg style="left:537px;top:26px" width="18" height="18" viewBox="537 26 18 18"><rect x="538.5" y="27.5" width="12" height="12" rx="2" fill="#f4f4f2" stroke="#50545a" stroke-width="1.3"/><line x1="549" y1="38" x2="552" y2="41" stroke="#50545a" stroke-width="1.8"/><circle cx="546" cy="35.3" r="4.6" fill="#fff" stroke="#50545a" stroke-width="1.3"/><path d="M543.6 35.3 H548.4 M546 32.9 V37.7" stroke="#f02020" stroke-width="1.0"/></svg>
<svg style="left:559px;top:24px" width="20" height="20" viewBox="559 24 20 20"><line x1="572.84" y1="38.84" x2="576.9000000000001" y2="42.900000000000006" stroke="#50545a" stroke-width="1.8"/><circle cx="568.5" cy="34.5" r="6.2" fill="#f4f4f2" stroke="#50545a" stroke-width="1.1"/><rect x="560" y="32.5" width="3" height="3" fill="#f4f3ee"/><text x="560.3" y="33.6" font-family="Liberation Sans" font-weight="bold" font-size="9.5" fill="#f2c23a" stroke="#50545a" stroke-width="0.9" paint-order="stroke">R</text></svg>
<svg style="left:583px;top:26px" width="20" height="20" viewBox="583 26 20 20"><line x1="595.34" y1="38.34" x2="599.4000000000001" y2="42.400000000000006" stroke="#50545a" stroke-width="1.8"/><circle cx="591" cy="34" r="6.2" fill="#f4f4f2" stroke="#50545a" stroke-width="1.1"/><path d="M588 34 H594 M591 31 V37" stroke="#f02020" stroke-width="1.0"/></svg>
<svg style="left:606px;top:26px" width="20" height="20" viewBox="606 26 20 20"><line x1="618.34" y1="38.34" x2="622.4000000000001" y2="42.400000000000006" stroke="#50545a" stroke-width="1.8"/><circle cx="614" cy="34" r="6.2" fill="#f4f4f2" stroke="#50545a" stroke-width="1.1"/><path d="M611 34 H617" stroke="#f02020" stroke-width="1.0"/></svg>
<svg style="left:628px;top:29px" width="19" height="11" viewBox="628 29 19 11"><path d="M629.5 34 L635 30.5 V37.5 Z" fill="#f4c43c" stroke="#50545a" stroke-width="1.1"/><path d="M637.5 30.5 H643.5 L644.5 31.5 V34.5 L643.5 35.5 H640.5 V38.5 H637.5 Z" fill="#fff" stroke="#50545a" stroke-width="1"/><rect x="640" y="32.5" width="3" height="1.2" fill="#6a6a6a"/></svg>
<svg style="left:655px;top:25px" width="11" height="19" viewBox="655 25 11 19"><path d="M660 26.5 L663.5 32 H656.5 Z" fill="#20a83a" stroke="#50545a" stroke-width="1.1"/><path d="M656.5 34.5 H662.5 L663.5 35.5 V38.5 L662.5 39.5 H659.5 V42 H656.5 Z" fill="#fff" stroke="#50545a" stroke-width="1"/><rect x="659" y="36.5" width="3" height="1.2" fill="#6a6a6a"/></svg>
<svg style="left:678px;top:25px" width="11" height="19" viewBox="678 25 11 19"><path d="M679.5 26.5 H685.5 L686.5 27.5 V30.5 L685.5 31.5 H682.5 V34 H679.5 Z" fill="#fff" stroke="#50545a" stroke-width="1"/><rect x="682" y="28.5" width="3" height="1.2" fill="#6a6a6a"/><path d="M679.5 35.5 H686.5 L683 41.5 Z" fill="#fff" stroke="#50545a" stroke-width="1.1"/></svg>
<svg style="left:697px;top:29px" width="19" height="11" viewBox="697 29 19 11"><path d="M698.5 30.5 H704.5 L705.5 31.5 V34.5 L704.5 35.5 H701.5 V38.5 H698.5 Z" fill="#fff" stroke="#50545a" stroke-width="1"/><rect x="701" y="32.5" width="3" height="1.2" fill="#6a6a6a"/><path d="M707 30.5 L713.5 34.2 L707 38 Z" fill="#f02020" stroke="#50545a" stroke-width="1.1"/></svg>
<svg style="left:720px;top:23px" width="19" height="20" viewBox="720 23 19 20"><path d="M722.5 29.5 L730.5 40.5 M730.5 29.5 L722.5 40.5" stroke="#50545a" stroke-width="3.6" fill="none"/><path d="M722.5 29.5 L730.5 40.5 M730.5 29.5 L722.5 40.5" stroke="#fff" stroke-width="1.6" fill="none"/><path d="M730 29.5 H736.5 M733.25 26.25 V32.75" stroke="#20a040" stroke-width="2"/></svg>
<svg style="left:743px;top:23px" width="19" height="20" viewBox="743 23 19 20"><path d="M745.5 29.5 L753.5 40.5 M753.5 29.5 L745.5 40.5" stroke="#50545a" stroke-width="3.6" fill="none"/><path d="M745.5 29.5 L753.5 40.5 M753.5 29.5 L745.5 40.5" stroke="#fff" stroke-width="1.6" fill="none"/><path d="M753 28 H760" stroke="#f02020" stroke-width="2"/></svg>
<svg style="left:766px;top:23px" width="19" height="20" viewBox="766 23 19 20"><path d="M768.5 29.5 L772.5 35 L776.5 29.5 M772.5 35 V40.5" stroke="#50545a" stroke-width="3.6" fill="none"/><path d="M768.5 29.5 L772.5 35 L776.5 29.5 M772.5 35 V40.5" stroke="#fff" stroke-width="1.6" fill="none"/><path d="M776 29.5 H782.5 M779.25 26.25 V32.75" stroke="#20a040" stroke-width="2"/></svg>
<svg style="left:789px;top:23px" width="19" height="20" viewBox="789 23 19 20"><path d="M791.5 29.5 L795.5 35 L799.5 29.5 M795.5 35 V40.5" stroke="#50545a" stroke-width="3.6" fill="none"/><path d="M791.5 29.5 L795.5 35 L799.5 29.5 M795.5 35 V40.5" stroke="#fff" stroke-width="1.6" fill="none"/><path d="M799 28 H806" stroke="#f02020" stroke-width="2"/></svg>
<svg style="left:812px;top:29px" width="3" height="6"><path d="M0.5 3 L3 0.5 V5.5 Z" fill="#3a3a3a"/></svg>
<div class="t" style="left:653px;top:46px;font-size:9px;line-height:9px;color:#000;font-weight:normal;letter-spacing:-0.1px;">R: PILOT_SX&nbsp; L: 2&nbsp; S: Sector 2</div>
<div class="t" style="left:653px;top:56px;font-size:9px;line-height:9px;color:#f03c46;font-weight:normal;letter-spacing:-0.1px;">R: PILOT_SX&nbsp; L: 3&nbsp; S: Sector 2</div>
<div class="t" style="left:653px;top:66px;font-size:9px;line-height:9px;color:#f08c00;font-weight:normal;letter-spacing:-0.1px;">R: PILOT_SX&nbsp; L: 4&nbsp; S: Sector 2</div>
<svg style="left:0;top:0" width="816" height="316" shape-rendering="auto"><rect x="477" y="72" width="2" height="214" fill="#1a1a1a"/><rect x="477" y="284" width="299" height="2" fill="#1a1a1a"/><rect x="476" y="71.5" width="1" height="1.2" fill="#1a1a1a"/><rect x="476" y="92.8" width="1" height="1.2" fill="#1a1a1a"/><rect x="476" y="114.1" width="1" height="1.2" fill="#1a1a1a"/><rect x="476" y="135.4" width="1" height="1.2" fill="#1a1a1a"/><rect x="476" y="156.7" width="1" height="1.2" fill="#1a1a1a"/><rect x="476" y="178.0" width="1" height="1.2" fill="#1a1a1a"/><rect x="476" y="199.3" width="1" height="1.2" fill="#1a1a1a"/><rect x="476" y="220.6" width="1" height="1.2" fill="#1a1a1a"/><rect x="476" y="241.9" width="1" height="1.2" fill="#1a1a1a"/><rect x="476" y="263.2" width="1" height="1.2" fill="#1a1a1a"/><rect x="476" y="284.5" width="1" height="1.2" fill="#1a1a1a"/><rect x="477.0" y="286" width="1.2" height="1" fill="#1a1a1a"/><rect x="506.8" y="286" width="1.2" height="1" fill="#1a1a1a"/><rect x="536.5" y="286" width="1.2" height="1" fill="#1a1a1a"/><rect x="566.2" y="286" width="1.2" height="1" fill="#1a1a1a"/><rect x="596.0" y="286" width="1.2" height="1" fill="#1a1a1a"/><rect x="625.8" y="286" width="1.2" height="1" fill="#1a1a1a"/><rect x="655.5" y="286" width="1.2" height="1" fill="#1a1a1a"/><rect x="685.2" y="286" width="1.2" height="1" fill="#1a1a1a"/><rect x="715.0" y="286" width="1.2" height="1" fill="#1a1a1a"/><rect x="744.8" y="286" width="1.2" height="1" fill="#1a1a1a"/><rect x="774.5" y="286" width="1.2" height="1" fill="#1a1a1a"/><polyline points="478.0,125.3 488.0,113.3 499.0,101.9 503.0,105.0 507.0,117.0 513.0,135.0 517.7,151.9 526.0,179.9 539.2,220.0 546.7,224.7 556.0,230.3 569.0,226.5 580.3,217.2 590.0,201.6 600.3,184.7 604.0,190.6 609.1,212.6 615.0,234.6 619.4,252.2 623.8,258.8 628.2,263.2 632.6,266.9 637.0,268.4 643.6,268.4 651.0,267.2 657.5,258.1 670.0,242.0 684.3,220.7 704.8,187.1 716.0,174.0 725.3,167.5 732.8,167.5 735.6,169.4 742.1,162.9 753.3,149.8 767.3,134.9" fill="none" stroke="#2a2a2a" stroke-width="1.1"/><polyline points="478.0,114.2 484.0,107.0 491.0,100.0 494.0,100.0 500.0,101.9 503.0,105.0 508.0,120.7 512.0,135.0 517.7,150.0 524.3,172.4 537.3,196.7 546.7,215.3 556.0,221.0 565.3,220.0 572.8,215.3 584.0,200.4 590.0,189.0 595.9,181.0 599.5,181.7 603.2,190.6 607.6,218.5 612.0,243.4 616.4,256.6 622.3,264.0 627.4,267.6 634.0,263.2 640.0,259.6 645.8,258.8 651.7,257.4 657.5,254.4 670.0,240.5 682.4,222.6 702.9,187.1 716.0,166.6 730.9,146.1 745.9,125.5 753.3,117.1 758.9,113.4" fill="none" stroke="#f08c00" stroke-width="1.3"/><polyline points="478.0,98.6 481.0,100.5 494.0,86.7 500.0,79.3 503.0,82.0 508.0,113.0 512.0,133.5 517.7,150.0 528.0,183.6 539.2,220.0 543.0,222.8 548.5,224.7 556.0,221.9 565.3,218.0 574.7,211.6 585.9,196.7 590.0,189.0 595.9,179.5 598.8,180.3 601.0,184.0 604.7,202.3 609.1,225.8 613.5,249.3 617.9,259.6 626.7,269.9 629.6,270.6 635.5,267.6 642.9,261.0 651.7,250.0 660.5,237.5 670.0,225.8 676.8,215.1 693.6,190.9 704.8,181.5 716.0,166.6 730.9,147.9 744.9,126.5 748.7,125.5 753.3,125.5 756.1,121.8" fill="none" stroke="#f03c46" stroke-width="1.1"/><circle cx="767.3" cy="134.9" r="2.6" fill="#2a2a2a"/><circle cx="756.1" cy="121.8" r="2.8" fill="#f03c46"/><circle cx="758.9" cy="113.4" r="2.8" fill="#f08c00"/><circle cx="716.3" cy="175.8" r="10.2" fill="none" stroke="#2a2a2a" stroke-width="1" stroke-dasharray="2.2 0.8"/><path d="M706.0999999999999 175.8 H726.5 M716.3 165.60000000000002 V186.0" stroke="#2a2a2a" stroke-width="1.1"/><circle cx="707.8" cy="175.8" r="9.4" fill="none" stroke="#f03c46" stroke-width="1" stroke-dasharray="2.2 0.8"/><path d="M698.4 175.8 H717.1999999999999 M707.8 166.4 V185.20000000000002" stroke="#f03c46" stroke-width="1.1"/><circle cx="713.3" cy="175.8" r="9.8" fill="none" stroke="#f08c00" stroke-width="1" stroke-dasharray="2.2 0.8"/><path d="M703.5 175.8 H723.0999999999999 M713.3 166.0 V185.60000000000002" stroke="#f08c00" stroke-width="1.1"/></svg>
<div class="t" style="left:176px;width:300px;text-align:right;top:68px;font-size:10px;line-height:10px;color:#1a1a1a;font-weight:normal;letter-spacing:-0.35px;">109.2</div>
<div class="t" style="left:176px;width:300px;text-align:right;top:89px;font-size:10px;line-height:10px;color:#1a1a1a;font-weight:normal;letter-spacing:-0.35px;">101.4</div>
<div class="t" style="left:176px;width:300px;text-align:right;top:110px;font-size:10px;line-height:10px;color:#1a1a1a;font-weight:normal;letter-spacing:-0.35px;">93.6</div>
<div class="t" style="left:176px;width:300px;text-align:right;top:131px;font-size:10px;line-height:10px;color:#1a1a1a;font-weight:normal;letter-spacing:-0.35px;">85.8</div>
<div class="t" style="left:176px;width:300px;text-align:right;top:153px;font-size:10px;line-height:10px;color:#1a1a1a;font-weight:normal;letter-spacing:-0.35px;">78</div>
<div class="t" style="left:176px;width:300px;text-align:right;top:174px;font-size:10px;line-height:10px;color:#1a1a1a;font-weight:normal;letter-spacing:-0.35px;">70.2</div>
<div class="t" style="left:176px;width:300px;text-align:right;top:195px;font-size:10px;line-height:10px;color:#1a1a1a;font-weight:normal;letter-spacing:-0.35px;">62.4</div>
<div class="t" style="left:176px;width:300px;text-align:right;top:217px;font-size:10px;line-height:10px;color:#1a1a1a;font-weight:normal;letter-spacing:-0.35px;">54.6</div>
<div class="t" style="left:176px;width:300px;text-align:right;top:238px;font-size:10px;line-height:10px;color:#1a1a1a;font-weight:normal;letter-spacing:-0.35px;">46.8</div>
<div class="t" style="left:176px;width:300px;text-align:right;top:259px;font-size:10px;line-height:10px;color:#1a1a1a;font-weight:normal;letter-spacing:-0.35px;">39</div>
<div class="t" style="left:176px;width:300px;text-align:right;top:281px;font-size:10px;line-height:10px;color:#1a1a1a;font-weight:normal;letter-spacing:-0.35px;">31.2</div>
<div class="t" style="left:278px;width:400px;text-align:center;top:287px;font-size:10px;line-height:10px;color:#1a1a1a;font-weight:normal;letter-spacing:-0.6px;">0</div>
<div class="t" style="left:307px;width:400px;text-align:center;top:287px;font-size:10px;line-height:10px;color:#1a1a1a;font-weight:normal;letter-spacing:-0.6px;">2.7</div>
<div class="t" style="left:337px;width:400px;text-align:center;top:287px;font-size:10px;line-height:10px;color:#1a1a1a;font-weight:normal;letter-spacing:-0.6px;">5.4</div>
<div class="t" style="left:367px;width:400px;text-align:center;top:287px;font-size:10px;line-height:10px;color:#1a1a1a;font-weight:normal;letter-spacing:-0.6px;">8.1</div>
<div class="t" style="left:396px;width:400px;text-align:center;top:287px;font-size:10px;line-height:10px;color:#1a1a1a;font-weight:normal;letter-spacing:-0.6px;">10.8</div>
<div class="t" style="left:426px;width:400px;text-align:center;top:287px;font-size:10px;line-height:10px;color:#1a1a1a;font-weight:normal;letter-spacing:-0.6px;">13.5</div>
<div class="t" style="left:456px;width:400px;text-align:center;top:287px;font-size:10px;line-height:10px;color:#1a1a1a;font-weight:normal;letter-spacing:-0.6px;">16.2</div>
<div class="t" style="left:486px;width:400px;text-align:center;top:287px;font-size:10px;line-height:10px;color:#1a1a1a;font-weight:normal;letter-spacing:-0.6px;">18.9</div>
<div class="t" style="left:516px;width:400px;text-align:center;top:287px;font-size:10px;line-height:10px;color:#1a1a1a;font-weight:normal;letter-spacing:-0.6px;">21.6</div>
<div class="t" style="left:545px;width:400px;text-align:center;top:287px;font-size:10px;line-height:10px;color:#1a1a1a;font-weight:normal;letter-spacing:-0.6px;">24.3</div>
<div class="t" style="left:575px;width:400px;text-align:center;top:287px;font-size:10px;line-height:10px;color:#1a1a1a;font-weight:normal;letter-spacing:-0.6px;">27</div>
<div class="t" style="left:426px;width:400px;text-align:center;top:296px;font-size:9px;line-height:9px;color:#1a1a1a;font-weight:normal;">time [s]</div>
<div class="t" style="left:413px;top:173px;width:70px;height:10px;font-size:10px;line-height:10px;text-align:center;color:#1a1a1a;letter-spacing:0.2px;transform:rotate(90deg);">speed [mph]</div>
<div style="left:0;top:0;width:430px;height:746px;overflow:hidden;"><div style="left:3px;top:338px;width:427px;height:22px;background:#ece9d8;"></div>
<div style="left:4px;top:339px;width:46px;height:20px;border:1px solid #1b4a86;border-radius:3px;background:linear-gradient(#fefefe,#f6f5f0 60%,#ebe9e1 85%,#dcd8cc);"></div>
<div class="t" style="left:-173px;width:400px;text-align:center;top:344px;font-size:11px;line-height:11px;color:#000;font-weight:normal;">Options</div>
<svg style="left:54px;top:341px" width="18" height="18" viewBox="54 341 18 18"><rect x="55.5" y="342.5" width="12" height="12" rx="2" fill="#f4f4f2" stroke="#50545a" stroke-width="1.3"/><line x1="66" y1="353" x2="69" y2="356" stroke="#50545a" stroke-width="1.8"/><circle cx="63" cy="350.3" r="4.6" fill="#fff" stroke="#50545a" stroke-width="1.3"/><path d="M60.6 350.3 H65.4 M63 347.9 V352.7" stroke="#f02020" stroke-width="1.0"/></svg>
<div style="left:77px;top:341px;width:16px;height:16px;border:1px solid #3c4046;border-radius:2px;background:#f4f3ee;"></div>
<svg style="left:77px;top:341px" width="16" height="16" viewBox="77 341 16 16"><path d="M81 354 Q79 351 82 348 L86 344 Q89 342 90 345 Q91 348 88 350 Q90 353 87 354 Z" fill="#fff" stroke="#3c4046" stroke-width="1.2"/><path d="M82 351 L85 347" stroke="#20a040" stroke-width="2"/></svg>
<svg style="left:100px;top:341px" width="20" height="20" viewBox="100 341 20 20"><line x1="112.34" y1="353.34" x2="116.4" y2="357.4" stroke="#50545a" stroke-width="1.8"/><circle cx="108" cy="349" r="6.2" fill="#f4f4f2" stroke="#50545a" stroke-width="1.1"/><path d="M105 349 H111 M108 346 V352" stroke="#f02020" stroke-width="1.0"/></svg>
<svg style="left:123px;top:341px" width="20" height="20" viewBox="123 341 20 20"><line x1="135.34" y1="353.34" x2="139.39999999999998" y2="357.4" stroke="#50545a" stroke-width="1.8"/><circle cx="131" cy="349" r="6.2" fill="#f4f4f2" stroke="#50545a" stroke-width="1.1"/><path d="M128 349 H134" stroke="#f02020" stroke-width="1.0"/></svg>
<svg style="left:145px;top:339px" width="16" height="18" viewBox="145 339 16 18"><path d="M155 344.1 A5.2 5.2 0 1 0 158.2 350" stroke="#50545a" stroke-width="1.5" fill="none"/><path d="M154 340.8 L158 343.8 L154 346.8 Z" fill="#20a040" stroke="#50545a" stroke-width="0.7"/></svg>
<svg style="left:169px;top:339px" width="16" height="18" viewBox="169 339 16 18"><path d="M175 344.1 A5.2 5.2 0 1 1 171.8 350" stroke="#50545a" stroke-width="1.5" fill="none"/><path d="M176 340.8 L172 343.8 L176 346.8 Z" fill="#20a040" stroke="#50545a" stroke-width="0.7"/></svg>
<svg style="left:191px;top:344px" width="19" height="11" viewBox="191 344 19 11"><path d="M192.5 349 L198 345.5 V352.5 Z" fill="#f4c43c" stroke="#50545a" stroke-width="1.1"/><path d="M200.5 345.5 H206.5 L207.5 346.5 V349.5 L206.5 350.5 H203.5 V353.5 H200.5 Z" fill="#fff" stroke="#50545a" stroke-width="1"/><rect x="203" y="347.5" width="3" height="1.2" fill="#6a6a6a"/></svg>
<svg style="left:218px;top:340px" width="11" height="19" viewBox="218 340 11 19"><path d="M223 341.5 L226.5 347 H219.5 Z" fill="#20a83a" stroke="#50545a" stroke-width="1.1"/><path d="M219.5 349.5 H225.5 L226.5 350.5 V353.5 L225.5 354.5 H222.5 V357 H219.5 Z" fill="#fff" stroke="#50545a" stroke-width="1"/><rect x="222" y="351.5" width="3" height="1.2" fill="#6a6a6a"/></svg>
<svg style="left:241px;top:340px" width="11" height="19" viewBox="241 340 11 19"><path d="M242.5 341.5 H248.5 L249.5 342.5 V345.5 L248.5 346.5 H245.5 V349 H242.5 Z" fill="#fff" stroke="#50545a" stroke-width="1"/><rect x="245" y="343.5" width="3" height="1.2" fill="#6a6a6a"/><path d="M242.5 350.5 H249.5 L246 356.5 Z" fill="#fff" stroke="#50545a" stroke-width="1.1"/></svg>
<svg style="left:260px;top:344px" width="19" height="11" viewBox="260 344 19 11"><path d="M261.5 345.5 H267.5 L268.5 346.5 V349.5 L267.5 350.5 H264.5 V353.5 H261.5 Z" fill="#fff" stroke="#50545a" stroke-width="1"/><rect x="264" y="347.5" width="3" height="1.2" fill="#6a6a6a"/><path d="M270 345.5 L276.5 349.2 L270 353 Z" fill="#f02020" stroke="#50545a" stroke-width="1.1"/></svg>
<svg style="left:284px;top:341px" width="14" height="17" viewBox="284 341 14 17"><path d="M288 356 L285.5 351 Q285 349.5 286.5 349.5 L288 351 V344 Q288 343 289 343 Q290 343 290 344 V349 V343 Q290 342 291 342 Q292 342 292 343 V349 V343.5 Q292 342.5 293 342.5 Q294 342.5 294 343.5 V349 V345 Q294 344 295 344 Q296 344 296 345 V352 Q296 354 294.5 356 Z" fill="#fff" stroke="#4a4a4a" stroke-width="1"/></svg>
<svg style="left:305px;top:340px" width="19" height="19" viewBox="305 340 19 19"><path d="M310 345 L316 352" stroke="#9a968a" stroke-width="2"/><circle cx="310" cy="345" r="2.6" fill="#fff" stroke="#9a968a" stroke-width="1.8"/><path d="M316 352 L316.5 354" stroke="#9a968a" stroke-width="2"/><circle cx="316.5" cy="354.5" r="2.6" fill="#fff" stroke="#9a968a" stroke-width="1.8"/><path d="M315 345 H322 M318.5 341.5 V348.5" stroke="#9a968a" stroke-width="2"/></svg>
<svg style="left:328px;top:340px" width="19" height="19" viewBox="328 340 19 19"><path d="M333 345 L339 352" stroke="#9a968a" stroke-width="2"/><circle cx="333" cy="345" r="2.6" fill="#fff" stroke="#9a968a" stroke-width="1.8"/><path d="M339 352 L339.5 354" stroke="#9a968a" stroke-width="2"/><circle cx="339.5" cy="354.5" r="2.6" fill="#fff" stroke="#9a968a" stroke-width="1.8"/><path d="M338 345 H345" stroke="#9a968a" stroke-width="2"/></svg>
<svg style="left:351px;top:340px" width="19" height="19" viewBox="351 340 19 19"><path d="M353.5 348 V342.5 H359" stroke="#9a968a" stroke-width="2.2" fill="none"/><path d="M355 344 L362 351" stroke="#9a968a" stroke-width="2"/><path d="M362 352 L362.5 354" stroke="#9a968a" stroke-width="2"/><circle cx="362.5" cy="354.5" r="2.6" fill="#fff" stroke="#9a968a" stroke-width="1.8"/><path d="M361 345 H368 M364.5 341.5 V348.5" stroke="#9a968a" stroke-width="2"/></svg>
<svg style="left:387px;top:342px" width="13" height="13" viewBox="387 342 13 13"><rect x="387.5" y="342.5" width="12" height="12" fill="#f4f4f0" stroke="#1c5180" stroke-width="1"/><path d="M390 348 L392.3 350.5 L397 345.5" stroke="#21a121" stroke-width="2" fill="none"/></svg>
<div class="t" style="left:403px;top:344px;font-size:11px;line-height:11px;color:#000;font-weight:normal;">Interactive Mode</div>
<svg style="left:0;top:0" width="430" height="746"><path d="M40.5 369 V373.5 H149.5 V369" fill="none" stroke="#000" stroke-width="1"/><rect x="81" y="360" width="2" height="41" fill="#dedede"/><rect x="349" y="360" width="3" height="19" fill="#dedede"/><rect x="84" y="447" width="1" height="9" fill="#e4e4e4"/><path d="M85.3 470.0 C85.5 475.5 85.8 491.8 86.3 502.9 C86.7 514.1 87.3 525.8 88.0 536.9 C88.7 548.1 89.6 558.9 90.3 569.9 C91.0 580.9 91.6 591.8 92.3 602.9 C93.0 614.1 93.7 627.9 94.6 636.9 C95.5 645.8 96.3 650.7 98.0 656.7 C99.6 662.6 101.7 667.5 104.4 672.4 C107.2 677.3 110.4 681.7 114.3 686.1 C118.1 690.6 122.6 695.2 127.5 699.0 C132.4 702.7 138.2 706.1 143.9 708.8 C149.5 711.6 155.7 714.0 161.3 715.5 C167.0 717.1 172.0 717.3 177.8 718.2 C183.6 719.1 190.1 720.1 196.2 721.0 C202.3 721.9 208.0 722.6 214.5 723.4 C220.9 724.3 228.8 725.6 234.7 726.1 C240.6 726.6 245.9 726.6 250.0 726.5 C254.0 726.4 255.8 726.8 259.2 725.6 C262.5 724.4 266.9 721.7 270.0 719.4 C273.1 717.0 275.5 714.7 277.7 711.6 C279.9 708.5 281.9 704.4 283.2 700.8 C284.5 697.1 285.1 693.8 285.5 689.9 C285.9 685.9 285.7 681.4 285.8 677.2 C285.9 672.9 286.0 669.1 286.3 664.3 C286.7 659.5 287.1 652.8 287.9 648.2 C288.7 643.6 289.7 640.2 291.2 636.7 C292.7 633.2 294.6 631.0 296.9 627.0 C299.1 622.9 300.7 620.0 304.9 612.6 C309.1 605.1 317.8 590.7 322.1 582.1 C326.4 573.5 328.6 565.7 330.7 560.8 C332.8 555.8 333.7 554.9 334.8 552.5 C335.9 550.0 336.1 550.9 337.5 546.3 C338.8 541.8 341.2 533.0 342.7 525.1 C344.3 517.1 345.7 506.9 346.7 498.5 C347.8 490.2 348.6 478.8 349.0 474.9" fill="none" stroke="#262626" stroke-width="1"/><path d="M81.0 409.0 C81.2 414.2 81.7 429.9 82.0 440.0 C82.3 450.2 82.7 459.5 83.0 470.0 C83.3 480.5 83.6 491.9 84.0 503.0 C84.5 514.2 85.0 525.9 85.7 537.1 C86.4 548.2 87.3 559.1 88.0 570.1 C88.7 581.1 89.3 591.9 90.0 603.1 C90.7 614.2 91.3 628.1 92.3 637.1 C93.3 646.1 94.0 651.2 95.7 657.3 C97.4 663.3 99.6 668.4 102.4 673.5 C105.2 678.5 108.6 683.1 112.5 687.7 C116.5 692.2 121.0 696.9 126.1 700.8 C131.1 704.7 137.1 708.1 142.9 710.9 C148.6 713.7 155.0 716.2 160.7 717.8 C166.5 719.4 171.6 719.6 177.4 720.5 C183.3 721.4 189.7 722.4 195.9 723.3 C202.0 724.2 207.7 724.8 214.2 725.7 C220.6 726.5 228.5 727.9 234.5 728.4 C240.5 728.9 245.8 728.9 250.0 728.8 C254.3 728.7 256.4 729.0 259.9 727.7 C263.5 726.5 268.1 723.7 271.4 721.2 C274.7 718.7 277.3 716.3 279.6 713.0 C281.9 709.7 284.0 705.3 285.3 701.5 C286.7 697.7 287.3 694.2 287.8 690.1 C288.3 686.1 288.0 681.5 288.1 677.2 C288.2 673.0 288.2 669.2 288.6 664.5 C288.9 659.7 289.4 653.1 290.2 648.6 C291.0 644.1 291.9 641.0 293.3 637.6 C294.8 634.2 296.6 632.1 298.9 628.1 C301.1 624.1 302.7 621.2 306.9 613.7 C311.1 606.2 319.9 591.8 324.2 583.1 C328.5 574.5 330.7 566.6 332.8 561.7 C334.9 556.7 335.8 555.9 336.9 553.4 C338.0 551.0 338.3 551.6 339.7 547.0 C341.0 542.3 343.4 533.5 345.0 525.5 C346.5 517.5 347.9 507.2 349.0 498.8 C350.0 490.4 350.9 481.2 351.3 475.1 C351.7 468.9 351.5 471.2 351.5 462.0 C351.5 452.8 351.5 433.8 351.5 420.0 C351.5 406.2 351.5 385.8 351.5 379.0" fill="none" stroke="#f03c46" stroke-width="1"/><path d="M81.3 409 V456 M348.9 379 V400 M348.9 410 V420" stroke="#f03c46" stroke-width="1.2"/><path d="M82.0 409.0 C82.2 414.2 82.7 429.8 83.0 440.0 C83.3 450.2 83.7 459.5 84.0 470.0 C84.3 480.5 84.5 491.8 85.0 503.0 C85.5 514.2 86.0 525.8 86.7 537.0 C87.4 548.2 88.3 559.0 89.0 570.0 C89.7 581.0 90.3 591.8 91.0 603.0 C91.7 614.2 92.3 628.0 93.3 637.0 C94.2 646.0 95.0 651.0 96.7 657.0 C98.4 663.0 100.5 668.0 103.3 673.0 C106.1 678.0 109.4 682.5 113.3 687.0 C117.2 691.5 121.7 696.2 126.7 700.0 C131.7 703.8 137.6 707.2 143.3 710.0 C149.0 712.8 155.3 715.2 161.0 716.8 C166.7 718.4 171.8 718.6 177.6 719.5 C183.4 720.4 189.9 721.4 196.0 722.3 C202.1 723.2 207.9 723.9 214.3 724.7 C220.7 725.6 228.7 726.9 234.6 727.4 C240.5 727.9 245.8 727.9 250.0 727.8 C254.2 727.7 256.1 728.0 259.6 726.8 C263.1 725.6 267.6 722.8 270.8 720.4 C274.0 718.0 276.5 715.6 278.8 712.4 C281.1 709.2 283.1 704.9 284.4 701.2 C285.7 697.5 286.4 694.0 286.8 690.0 C287.2 686.0 287.0 681.5 287.1 677.2 C287.2 672.9 287.2 669.2 287.6 664.4 C288.0 659.6 288.4 652.9 289.2 648.4 C290.0 643.9 290.9 640.7 292.4 637.2 C293.9 633.7 295.7 631.6 298.0 627.6 C300.3 623.6 301.8 620.7 306.0 613.2 C310.2 605.7 319.0 591.4 323.3 582.7 C327.6 574.1 329.8 566.2 331.9 561.3 C334.0 556.3 334.9 555.4 336.0 553.0 C337.1 550.6 337.4 551.3 338.7 546.7 C340.0 542.1 342.4 533.3 344.0 525.3 C345.6 517.3 346.9 507.1 348.0 498.7 C349.1 490.3 349.9 481.1 350.3 475.0 C350.7 468.9 350.5 471.2 350.5 462.0 C350.5 452.8 350.5 433.8 350.5 420.0 C350.5 406.2 350.5 385.8 350.5 379.0" fill="none" stroke="#f08c00" stroke-width="2.2"/><path d="M336 556 L368.5 568" stroke="#262626" stroke-width="1.5"/><path d="M336 554.5 L368.5 564" stroke="#f03c46" stroke-width="1.5"/><path d="M336 553 L366.7 561.3" stroke="#f08c00" stroke-width="2"/><circle cx="335.8" cy="552.8" r="4.8" fill="none" stroke="#f08c00" stroke-width="2"/><path d="M333 551 H338" stroke="#262626" stroke-width="1"/><path d="M3 408 L191 405 V412" fill="none" stroke="#0a0af0" stroke-width="2"/><path d="M184.5 412 H198.5 L191.5 424.5 Z" fill="#0a0af0"/><path d="M241.5 382 V387.5 L430 378.5" fill="none" stroke="#0a0af0" stroke-width="2"/><path d="M235 382 H249 L241.5 369 Z" fill="#0a0af0"/><path d="M388 444.7 H430" stroke="#0a0af0" stroke-width="2"/><circle cx="388" cy="444.7" r="4.2" fill="#0a0af0"/></svg>
<div class="t" style="left:-106px;width:400px;text-align:center;top:364px;font-size:9px;line-height:9px;color:#000;font-weight:normal;letter-spacing:0.1px;">scale: 100m</div>
<div class="t" style="left:12px;top:402px;font-size:9px;line-height:9px;color:#000;font-weight:normal;letter-spacing:-0.1px;">R: PILOT_SX&nbsp; L: 2&nbsp; S: Sector 2</div>
<div class="t" style="left:12px;top:412px;font-size:9px;line-height:9px;color:#f03c46;font-weight:normal;letter-spacing:-0.1px;">R: PILOT_SX&nbsp; L: 3&nbsp; S: Sector 2</div>
<div class="t" style="left:12px;top:422px;font-size:9px;line-height:9px;color:#f08c00;font-weight:normal;letter-spacing:-0.1px;">R: PILOT_SX&nbsp; L: 4&nbsp; S: Sector 2</div>
<div class="t" style="left:373px;top:440px;font-size:9px;line-height:9px;color:#000;font-weight:normal;letter-spacing:-0.3px;">M3</div>
<div class="t" style="left:184px;top:720px;font-size:9px;line-height:9px;color:#000;font-weight:normal;">Sector 2</div>
<div style="left:215px;top:724px;width:5px;height:1px;background:#333;"></div></div>
<div style="left:438px;top:338px;width:193px;height:21px;background:#ece9d8;"></div>
<div style="left:439px;top:339px;width:62px;height:18px;border:1px solid #1b4a86;border-radius:3px;background:linear-gradient(#fefefe,#f6f5f0 60%,#ebe9e1 85%,#dcd8cc);"></div>
<div class="t" style="left:270px;width:400px;text-align:center;top:344px;font-size:11px;line-height:11px;color:#000;font-weight:normal;">Options</div>
<svg style="left:503px;top:342px" width="13" height="13" viewBox="503 342 13 13"><rect x="503.5" y="342.5" width="12" height="12" fill="#f4f4f0" stroke="#1c5180" stroke-width="1"/><path d="M506 348 L508.3 350.5 L513 345.5" stroke="#21a121" stroke-width="2" fill="none"/></svg>
<div class="t" style="left:518px;top:344px;font-size:11px;line-height:11px;color:#000;font-weight:normal;letter-spacing:-0.1px;">Interactive Mode</div>
<div class="t" style="left:663px;top:339px;font-size:9px;line-height:9px;color:#000;font-weight:bold;letter-spacing:0.8px;">R: PILOT_SX&nbsp; L: 2&nbsp; S: Sector 2</div>
<div class="t" style="left:663px;top:349px;font-size:9px;line-height:9px;color:#f03c46;font-weight:bold;letter-spacing:0.8px;">R: PILOT_SX&nbsp; L: 3&nbsp; S: Sector 2</div>
<div class="t" style="left:663px;top:359px;font-size:9px;line-height:9px;color:#f08c00;font-weight:bold;letter-spacing:0.8px;">R: PILOT_SX&nbsp; L: 4&nbsp; S: Sector 2</div>
<svg style="left:0;top:0" width="816" height="750"><rect x="492" y="419.8" width="304" height="1" fill="#a0a0a0"/><rect x="492" y="446.9" width="304" height="1" fill="#a0a0a0"/><rect x="492" y="474.0" width="304" height="1" fill="#a0a0a0"/><rect x="492" y="501.0" width="304" height="1" fill="#a0a0a0"/><rect x="492" y="528.1" width="304" height="1" fill="#a0a0a0"/><rect x="492" y="555.2" width="304" height="1" fill="#a0a0a0"/><rect x="492" y="582.3" width="304" height="1" fill="#a0a0a0"/><rect x="492" y="609.3" width="304" height="1" fill="#a0a0a0"/><rect x="492" y="636.4" width="304" height="1" fill="#a0a0a0"/><rect x="490" y="419" width="2" height="251" fill="#000"/><rect x="488" y="419.8" width="2" height="1.2" fill="#000"/><rect x="488" y="446.9" width="2" height="1.2" fill="#000"/><rect x="488" y="474.0" width="2" height="1.2" fill="#000"/><rect x="488" y="501.0" width="2" height="1.2" fill="#000"/><rect x="488" y="528.1" width="2" height="1.2" fill="#000"/><rect x="488" y="555.2" width="2" height="1.2" fill="#000"/><rect x="488" y="582.3" width="2" height="1.2" fill="#000"/><rect x="488" y="609.3" width="2" height="1.2" fill="#000"/><rect x="488" y="636.4" width="2" height="1.2" fill="#000"/><rect x="488" y="663.5" width="2" height="1.2" fill="#000"/><rect x="490" y="663" width="306" height="2" fill="#000"/><rect x="490.0" y="664" width="2" height="5.5" fill="#000"/><rect x="510.3" y="664" width="2" height="5.5" fill="#000"/><rect x="530.7" y="664" width="2" height="5.5" fill="#000"/><rect x="551.0" y="664" width="2" height="5.5" fill="#000"/><rect x="571.3" y="664" width="2" height="5.5" fill="#000"/><rect x="591.6" y="664" width="2" height="5.5" fill="#000"/><rect x="612.0" y="664" width="2" height="5.5" fill="#000"/><rect x="632.3" y="664" width="2" height="5.5" fill="#000"/><rect x="652.6" y="664" width="2" height="5.5" fill="#000"/><rect x="673.0" y="664" width="2" height="5.5" fill="#000"/><rect x="693.3" y="664" width="2" height="5.5" fill="#000"/><rect x="713.6" y="664" width="2" height="5.5" fill="#000"/><rect x="734.0" y="664" width="2" height="5.5" fill="#000"/><rect x="754.3" y="664" width="2" height="5.5" fill="#000"/><rect x="774.6" y="664" width="2" height="5.5" fill="#000"/><rect x="795.0" y="664" width="2" height="5.5" fill="#000"/><rect x="496.0" y="663" width="2" height="2" fill="#f03c46"/><rect x="497.0" y="663" width="10" height="2" fill="#f08c00"/><rect x="516.3" y="663" width="2" height="2" fill="#f03c46"/><rect x="517.3" y="663" width="10" height="2" fill="#f08c00"/><rect x="536.7" y="663" width="2" height="2" fill="#f03c46"/><rect x="537.7" y="663" width="10" height="2" fill="#f08c00"/><rect x="557.0" y="663" width="2" height="2" fill="#f03c46"/><rect x="558.0" y="663" width="10" height="2" fill="#f08c00"/><rect x="577.3" y="663" width="2" height="2" fill="#f03c46"/><rect x="578.3" y="663" width="10" height="2" fill="#f08c00"/><rect x="597.6" y="663" width="2" height="2" fill="#f03c46"/><rect x="598.6" y="663" width="10" height="2" fill="#f08c00"/><rect x="618.0" y="663" width="2" height="2" fill="#f03c46"/><rect x="619.0" y="663" width="10" height="2" fill="#f08c00"/><rect x="638.3" y="663" width="2" height="2" fill="#f03c46"/><rect x="639.3" y="663" width="10" height="2" fill="#f08c00"/><rect x="658.6" y="663" width="2" height="2" fill="#f03c46"/><rect x="659.6" y="663" width="10" height="2" fill="#f08c00"/><rect x="679.0" y="663" width="2" height="2" fill="#f03c46"/><rect x="680.0" y="663" width="10" height="2" fill="#f08c00"/><rect x="699.3" y="663" width="2" height="2" fill="#f03c46"/><rect x="700.3" y="663" width="10" height="2" fill="#f08c00"/><rect x="719.6" y="663" width="2" height="2" fill="#f03c46"/><rect x="720.6" y="663" width="10" height="2" fill="#f08c00"/><rect x="740.0" y="663" width="2" height="2" fill="#f03c46"/><rect x="741.0" y="663" width="10" height="2" fill="#f08c00"/><rect x="760.3" y="663" width="2" height="2" fill="#f03c46"/><rect x="761.3" y="663" width="10" height="2" fill="#f08c00"/><rect x="780.6" y="663" width="2" height="2" fill="#f03c46"/><rect x="781.6" y="663" width="10" height="2" fill="#f08c00"/><path d="M494.0 664 V429.9 H501.0 V664" fill="none" stroke="#262626" stroke-width="2"/><path d="M514.8 664 V602.7 H521.8 V664" fill="none" stroke="#262626" stroke-width="2"/><path d="M618.0 664 V646.9 H625.0 V664" fill="none" stroke="#f03c46" stroke-width="2"/><path d="M638.3 664 V421.3 H645.3 V664" fill="none" stroke="#f03c46" stroke-width="2"/><path d="M658.6 664 V630.6 H665.6 V664" fill="none" stroke="#f03c46" stroke-width="2"/><path d="M762.3 664 V608.7 H769.3 V664" fill="none" stroke="#f08c00" stroke-width="2"/><path d="M782.6 664 V424.9 H789.6 V664" fill="none" stroke="#f08c00" stroke-width="2"/></svg>
<div class="t" style="left:188px;width:300px;text-align:right;top:416px;font-size:10px;line-height:10px;color:#000;font-weight:normal;letter-spacing:-0.3px;">82.2</div>
<div class="t" style="left:188px;width:300px;text-align:right;top:443px;font-size:10px;line-height:10px;color:#000;font-weight:normal;letter-spacing:-0.3px;">73.1</div>
<div class="t" style="left:188px;width:300px;text-align:right;top:470px;font-size:10px;line-height:10px;color:#000;font-weight:normal;letter-spacing:-0.3px;">63.9</div>
<div class="t" style="left:188px;width:300px;text-align:right;top:498px;font-size:10px;line-height:10px;color:#000;font-weight:normal;letter-spacing:-0.3px;">54.8</div>
<div class="t" style="left:188px;width:300px;text-align:right;top:525px;font-size:10px;line-height:10px;color:#000;font-weight:normal;letter-spacing:-0.3px;">45.7</div>
<div class="t" style="left:188px;width:300px;text-align:right;top:552px;font-size:10px;line-height:10px;color:#000;font-weight:normal;letter-spacing:-0.3px;">36.5</div>
<div class="t" style="left:188px;width:300px;text-align:right;top:579px;font-size:10px;line-height:10px;color:#000;font-weight:normal;letter-spacing:-0.3px;">27.4</div>
<div class="t" style="left:188px;width:300px;text-align:right;top:606px;font-size:10px;line-height:10px;color:#000;font-weight:normal;letter-spacing:-0.3px;">18.3</div>
<div class="t" style="left:188px;width:300px;text-align:right;top:633px;font-size:10px;line-height:10px;color:#000;font-weight:normal;letter-spacing:-0.3px;">9.13</div>
<div class="t" style="left:188px;width:300px;text-align:right;top:660px;font-size:10px;line-height:10px;color:#000;font-weight:normal;letter-spacing:-0.3px;">0</div>
<div class="t" style="left:291px;width:400px;text-align:center;top:677px;font-size:10px;line-height:10px;color:#000;font-weight:normal;letter-spacing:-0.6px;">111</div>
<div class="t" style="left:311px;width:400px;text-align:center;top:677px;font-size:10px;line-height:10px;color:#000;font-weight:normal;letter-spacing:-0.6px;">132</div>
<div class="t" style="left:332px;width:400px;text-align:center;top:677px;font-size:10px;line-height:10px;color:#000;font-weight:normal;letter-spacing:-0.6px;">153</div>
<div class="t" style="left:352px;width:400px;text-align:center;top:677px;font-size:10px;line-height:10px;color:#000;font-weight:normal;letter-spacing:-0.6px;">174</div>
<div class="t" style="left:372px;width:400px;text-align:center;top:677px;font-size:10px;line-height:10px;color:#000;font-weight:normal;letter-spacing:-0.6px;">195</div>
<div class="t" style="left:393px;width:400px;text-align:center;top:677px;font-size:10px;line-height:10px;color:#000;font-weight:normal;letter-spacing:-0.6px;">215</div>
<div class="t" style="left:413px;width:400px;text-align:center;top:677px;font-size:10px;line-height:10px;color:#000;font-weight:normal;letter-spacing:-0.6px;">236</div>
<div class="t" style="left:433px;width:400px;text-align:center;top:677px;font-size:10px;line-height:10px;color:#000;font-weight:normal;letter-spacing:-0.6px;">257</div>
<div class="t" style="left:454px;width:400px;text-align:center;top:677px;font-size:10px;line-height:10px;color:#000;font-weight:normal;letter-spacing:-0.6px;">278</div>
<div class="t" style="left:474px;width:400px;text-align:center;top:677px;font-size:10px;line-height:10px;color:#000;font-weight:normal;letter-spacing:-0.6px;">298</div>
<div class="t" style="left:494px;width:400px;text-align:center;top:677px;font-size:10px;line-height:10px;color:#000;font-weight:normal;letter-spacing:-0.6px;">319</div>
<div class="t" style="left:515px;width:400px;text-align:center;top:677px;font-size:10px;line-height:10px;color:#000;font-weight:normal;letter-spacing:-0.6px;">340</div>
<div class="t" style="left:535px;width:400px;text-align:center;top:677px;font-size:10px;line-height:10px;color:#000;font-weight:normal;letter-spacing:-0.6px;">361</div>
<div class="t" style="left:555px;width:400px;text-align:center;top:677px;font-size:10px;line-height:10px;color:#000;font-weight:normal;letter-spacing:-0.6px;">381</div>
<div class="t" style="left:576px;width:400px;text-align:center;top:677px;font-size:10px;line-height:10px;color:#000;font-weight:normal;letter-spacing:-0.6px;">402</div>
<div class="t" style="left:596px;width:400px;text-align:center;top:677px;font-size:10px;line-height:10px;color:#000;font-weight:normal;letter-spacing:-0.6px;">423</div>
<div class="t" style="left:426px;width:400px;text-align:center;top:686px;font-size:9px;line-height:9px;color:#000;font-weight:normal;">time [s]</div>
<div class="t" style="left:248px;width:400px;text-align:center;top:507px;font-size:9px;line-height:9px;color:#000;font-weight:normal;">F</div>
<div class="t" style="left:248px;width:400px;text-align:center;top:515px;font-size:9px;line-height:9px;color:#000;font-weight:normal;">r</div>
<div class="t" style="left:248px;width:400px;text-align:center;top:523px;font-size:9px;line-height:9px;color:#000;font-weight:normal;">e</div>
<div class="t" style="left:248px;width:400px;text-align:center;top:531px;font-size:9px;line-height:9px;color:#000;font-weight:normal;">q</div>
<div class="t" style="left:248px;width:400px;text-align:center;top:539px;font-size:9px;line-height:9px;color:#000;font-weight:normal;">u</div>
<div class="t" style="left:248px;width:400px;text-align:center;top:547px;font-size:9px;line-height:9px;color:#000;font-weight:normal;">e</div>
<div class="t" style="left:248px;width:400px;text-align:center;top:555px;font-size:9px;line-height:9px;color:#000;font-weight:normal;">n</div>
<div class="t" style="left:248px;width:400px;text-align:center;top:563px;font-size:9px;line-height:9px;color:#000;font-weight:normal;">c</div>
<div class="t" style="left:248px;width:400px;text-align:center;top:571px;font-size:9px;line-height:9px;color:#000;font-weight:normal;">y</div>
<div class="t" style="left:248px;width:400px;text-align:center;top:588px;font-size:9px;line-height:9px;color:#000;font-weight:normal;">%</div>
</body></html>
